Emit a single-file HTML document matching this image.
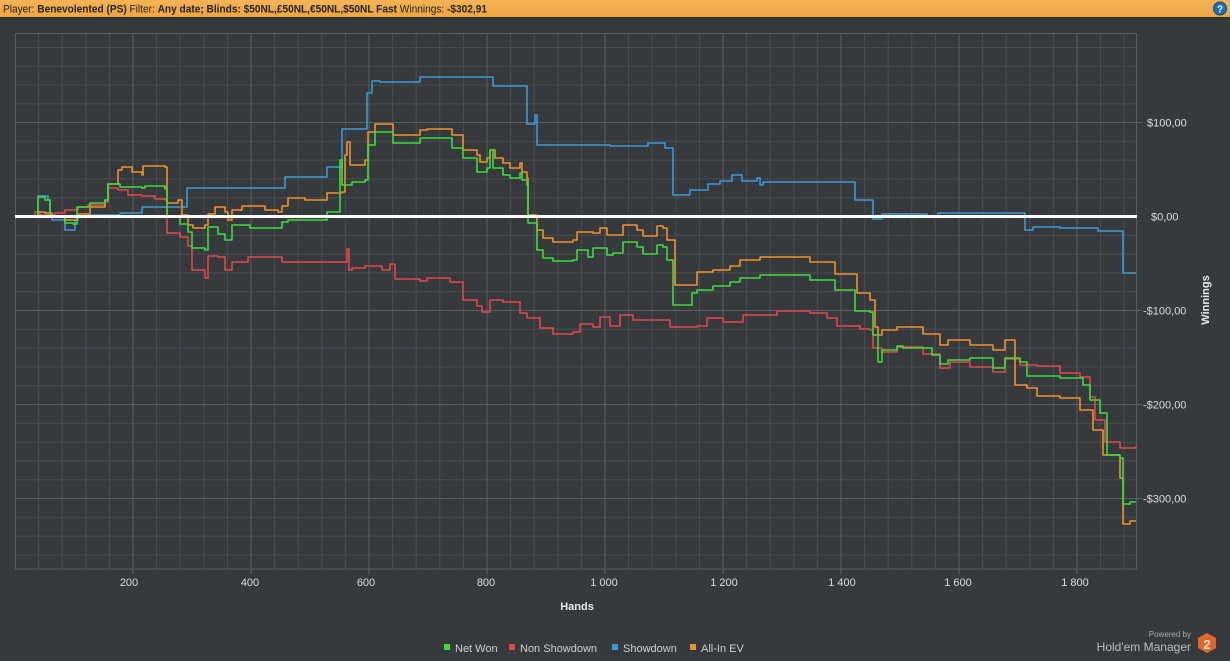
<!DOCTYPE html>
<html><head><meta charset="utf-8"><style>
html,body{margin:0;padding:0;background:#373a3d;width:1230px;height:661px;overflow:hidden;font-family:"Liberation Sans",sans-serif}
</style></head><body>
<svg width="1230" height="661" xmlns="http://www.w3.org/2000/svg" style="position:absolute;left:0;top:0">
<defs><linearGradient id="tb" x1="0" y1="0" x2="0" y2="1"><stop offset="0" stop-color="#f4b356"/><stop offset="1" stop-color="#eea640"/></linearGradient></defs>
<rect width="1230" height="661" fill="#373a3d"/>
<rect width="1230" height="17" fill="url(#tb)"/>
<rect y="17" width="1230" height="1" fill="#2a2c2e"/>
<text x="3" y="12.5" font-size="11" fill="#222" textLength="484" lengthAdjust="spacingAndGlyphs">Player:  <tspan font-weight="bold">Benevolented (PS)</tspan>  Filter:  <tspan font-weight="bold">Any date; Blinds: $50NL,£50NL,€50NL,$50NL Fast</tspan>  Winnings:  <tspan font-weight="bold">-$302,91</tspan></text>
<circle cx="1220" cy="8.5" r="6.5" fill="#1d6fb8" stroke="#0f4d86" stroke-width="1"/>
<text x="1220" y="12.5" font-size="10" font-weight="bold" fill="#fff" text-anchor="middle">?</text>

<g stroke="#484c50" stroke-width="1" fill="none">
<path d="M38.6 33V569M62.2 33V569M85.8 33V569M109.4 33V569M156.6 33V569M180.2 33V569M203.8 33V569M227.4 33V569M274.6 33V569M298.2 33V569M321.8 33V569M345.4 33V569M392.6 33V569M416.2 33V569M439.8 33V569M463.4 33V569M510.6 33V569M534.2 33V569M557.8 33V569M581.4 33V569M628.6 33V569M652.2 33V569M675.8 33V569M699.4 33V569M746.6 33V569M770.2 33V569M793.8 33V569M817.4 33V569M864.6 33V569M888.2 33V569M911.8 33V569M935.4 33V569M982.6 33V569M1006.2 33V569M1029.8 33V569M1053.4 33V569M1100.6 33V569M1124.2 33V569"/>
<path d="M15 47.5H1137M15 66.3H1137M15 85.1H1137M15 103.9H1137M15 141.3H1137M15 160.1H1137M15 178.9H1137M15 197.7H1137M15 235.3H1137M15 254.1H1137M15 272.9H1137M15 291.7H1137M15 329.3H1137M15 348.1H1137M15 366.9H1137M15 385.7H1137M15 423.3H1137M15 442.1H1137M15 460.9H1137M15 479.7H1137M15 517.3H1137M15 536.1H1137M15 554.9H1137"/>
</g>
<g stroke="#5a5e62" stroke-width="1" fill="none">
<path d="M133 33V574M251 33V574M369 33V574M487 33V574M605 33V574M723 33V574M841 33V574M959 33V574M1077 33V574"/>
<path d="M15 122.5H1142M15 310.5H1142M15 404.5H1142M15 498.5H1142"/>
<rect x="15.5" y="33.5" width="1121" height="535.5"/>
</g>

<g fill="none" stroke-width="1.6" stroke-linejoin="round">
<path stroke="#3b9ad9" d="M15 216H38V196H48V200H50V216H52V220H65V230H75V220H78V216H90V215H120V213H142V207H187V188H285V177H327V167H342V129H367V93H372V81H380V82H420V77H493V86H527V124H535V115H537V145H610V146H648V143H665V148H673V195H690V190H708V184H720V181H732V175H742V181H757V178H760V185H763V182H855V200H873V219H882V214H927V216H938V213H1025V230H1033V227H1060V228H1098V231H1123V273H1136"/>
<path stroke="#e0474c" d="M15 216H35V212H40V215H55V213H65V210H78V207H88V205H105V202H108V188H118V190H128V195H142V196H155V199H165V200H167V233H180V237H188V246H192V270H205V278H208V256H218V257H225V270H232V262H248V257H282V262H315V262H347V249H349V270H352V268H365V266H382V270H390V264H395V279H420V281H427V278H450V282H463V300H477V306H482V312H490V300H503V302H520V313H527V318H540V328H553V334H573V332H580V324H593V327H600V317H610V326H620V315H633V320H663V320H670V327H697V326H707V318H723V322H743V315H777V311H810V313H827V318H837V326H860V329H870V330H873V348H882V352H897V347H923V354H940V368H950V362H970V367H993V372H1005V359H1020V365H1037V366H1060V373H1080V377H1090V397H1095V420H1105V442H1120V448H1136V446"/>
<path stroke="#f0922c" d="M15 216H38V212H45V213H52V216H55V217H65V220H77V214H90V207H105V200H108V184H118V170H122V167H132V172H142V175H143V166H165V167H167V203H178V200H182V215H188V225H193V228H205V225H208V214H215V207H225V212H228V220H232V210H242V206H265V210H278V212H282V206H288V198H305V200H327V193H342V192H345V155H347V142H350V165H365V160H368V132H375V124H393V135H420V130H427V129H452V135H463V150H477V155H480V162H487V158H490V150H495V158H503V163H510V168H520V163H522V172H527V178H528V215H537V230H543V238H553V242H573V240H577V232H593V233H600V228H607V235H623V225H637V230H643V236H657V226H663V228H667V240H673V240H675V285H688V285H697V272H713V270H730V266H740V260H760V257H810V262H835V274H857V293H870V300H875V327H878V335H882V330H897V327H923V334H940V345H948V340H970V345H993V350H1005V340H1015V385H1027V388H1037V396H1060V398H1080V410H1093V430H1103V455H1120V478H1123V524H1130V521H1136"/>
<path stroke="#3ddc3d" d="M15 216H38V197H45V200H50V216H60V217H65V223H73V224H77V207H90V203H105V200H108V184H120V187H142V188H145V186H165V189H167V217H180V224H188V232H192V248H205V250H208V227H218V234H225V240H232V225H250V228H282V222H288V220H327V212H340V160H342V185H352V182H365V180H368V145H375V132H393V143H420V138H452V148H463V158H477V172H487V168H490V150H493V168H503V175H510V178H520V173H522V180H527V185H528V223H537V250H543V258H553V261H573V260H577V250H588V257H593V248H600V248H607V255H613V253H623V242H637V247H643V254H657V245H663V247H667V260H673V305H688V305H692V293H697V290H713V286H730V282H740V278H760V275H810V280H835V290H855V311H870V312H873V335H878V362H882V350H897V346H903V348H932V355H940V364H948V360H970V358H993V368H1005V358H1020V362H1027V376H1060V378H1083V385H1090V400H1100V413H1107V455H1120V458H1123V504H1130V502H1136"/>
</g>
<path d="M15 216.5H1137" stroke="#ffffff" stroke-width="3"/>

<g font-size="11" fill="#dcdcdc">
<text x="1147" y="126.5">$100,00</text>
<text x="1151" y="220.5">$0,00</text>
<text x="1143" y="314.5">-$100,00</text>
<text x="1143" y="408.5">-$200,00</text>
<text x="1143" y="502.5">-$300,00</text>
</g>
<g font-size="11" fill="#dcdcdc" text-anchor="middle">
<text x="129" y="586">200</text><text x="250" y="586">400</text><text x="366" y="586">600</text><text x="486" y="586">800</text><text x="604" y="586">1 000</text><text x="724" y="586">1 200</text><text x="842" y="586">1 400</text><text x="958" y="586">1 600</text><text x="1075" y="586">1 800</text>
</g>
<text x="577" y="610" font-size="11" font-weight="bold" fill="#e8e8e8" text-anchor="middle">Hands</text>
<text transform="translate(1209,300) rotate(-90)" font-size="11" font-weight="bold" fill="#e8e8e8" text-anchor="middle">Winnings</text>

<g font-size="11" fill="#cfcfcf">
<rect x="444" y="644" width="6" height="6" fill="#3ddc3d"/><text x="455" y="652">Net Won</text>
<rect x="509" y="644" width="6" height="6" fill="#e0474c"/><text x="520" y="652">Non Showdown</text>
<rect x="612" y="644" width="6" height="6" fill="#3b9ad9"/><text x="623" y="652">Showdown</text>
<rect x="690" y="644" width="6" height="6" fill="#f0922c"/><text x="701" y="652">All-In EV</text>
</g>
<text x="1191" y="637" font-size="8" fill="#aaaaaa" text-anchor="end">Powered by</text>
<text x="1191" y="651" font-size="12" fill="#bdbdbd" text-anchor="end">Hold'em Manager</text>
<polygon points="1207,633 1216,638 1216,648 1207,653 1198,648 1198,638" fill="#e0662a"/>
<text x="1207" y="649" font-size="13" font-weight="bold" fill="#f3e6dc" text-anchor="middle">2</text>
</svg>
</body></html>
